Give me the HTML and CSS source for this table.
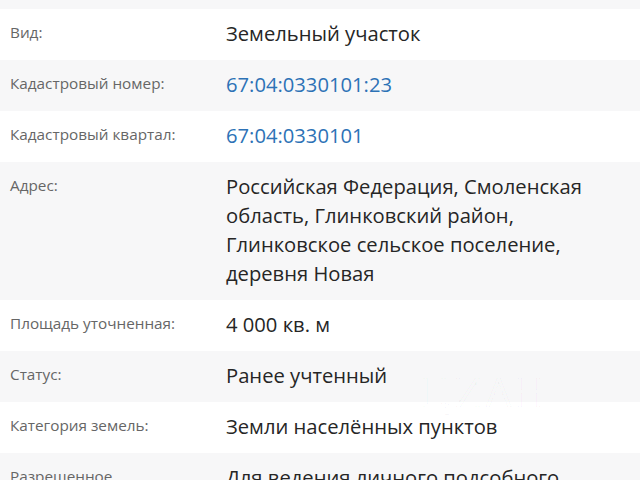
FILE: index.html
```html
<!DOCTYPE html>
<html lang="ru">
<head>
<meta charset="utf-8">
<link rel="stylesheet" href="styles.css">
</head>
<body>
<div class="sheet">
  <div class="top-strip"></div>
  <dl class="props">
    <div class="row">
      <dt class="label">Вид:</dt>
      <dd class="value">Земельный участок</dd>
    </div>
    <div class="row alt">
      <dt class="label">Кадастровый номер:</dt>
      <dd class="value"><a class="link" href="#">67:04:0330101:23</a></dd>
    </div>
    <div class="row">
      <dt class="label">Кадастровый квартал:</dt>
      <dd class="value"><a class="link" href="#">67:04:0330101</a></dd>
    </div>
    <div class="row alt">
      <dt class="label">Адрес:</dt>
      <dd class="value">Российская Федерация, Смоленская область, Глинковский район, Глинковское сельское поселение, деревня Новая</dd>
    </div>
    <div class="row">
      <dt class="label">Площадь уточненная:</dt>
      <dd class="value">4 000 кв. м</dd>
    </div>
    <div class="row alt">
      <dt class="label">Статус:</dt>
      <dd class="value">Ранее учтенный</dd>
    </div>
    <div class="row">
      <dt class="label">Категория земель:</dt>
      <dd class="value">Земли населённых пунктов</dd>
    </div>
    <div class="row alt">
      <dt class="label">Разрешенное использование:</dt>
      <dd class="value">Для ведения личного подсобного хозяйства</dd>
    </div>
  </dl>
  <div class="watermark">ЦИАН</div>
</div>
</body>
</html>
```
FILE: styles.css
```css
html, body {
  margin: 0;
  padding: 0;
  background: #ffffff;
}
body {
  font-family: "Open Sans", "Noto Sans", sans-serif;
  overflow: hidden;
  height: 480px;
}
.sheet {
  position: relative;
  width: 640px;
}
.top-strip {
  height: 9px;
  background: #f7f7f8;
}
.props {
  margin: 0;
  padding: 0;
}
.row {
  display: grid;
  grid-template-columns: 216px 1fr;
  padding: 10px 0 12px 10px;
  background: #ffffff;
}
.row.alt {
  background: #f7f7f8;
}
.label {
  margin: 0;
  padding-right: 20px;
  font-size: 15.3px;
  line-height: 26px;
  color: #666666;
}
.value {
  margin: 0;
  max-width: 385px;
  font-size: 20.2px;
  line-height: 29px;
  color: #262626;
}
.link {
  color: #2d72b6;
  text-decoration: none;
}
.watermark {
  position: absolute;
  left: 420px;
  top: 378px;
  font-size: 40px;
  line-height: 28px;
  letter-spacing: 3px;
  color: transparent;
  -webkit-text-stroke: 1px rgba(0, 0, 0, 0.035);
}
```
